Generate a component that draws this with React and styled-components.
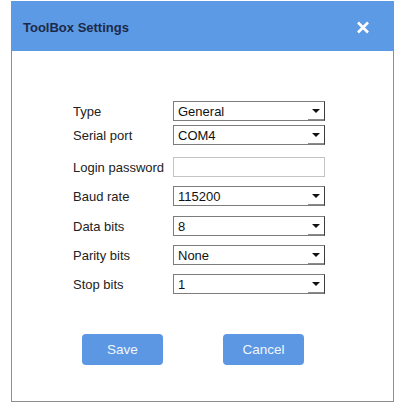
import React from "react";
import styled, { createGlobalStyle } from "styled-components";

const Global = createGlobalStyle`
  html, body { margin: 0; padding: 0; background: #ffffff; }
  body { font-family: "Liberation Sans", Arial, sans-serif; }
`;

const Dialog = styled.div`
  width: 383px;
  margin: 1px 0 0 11px;
  box-sizing: border-box;
`;

const Header = styled.div`
  height: 50px;
  background: #5d9ae6;
  display: flex;
  align-items: center;
  justify-content: space-between;
  padding: 0 24px 0 12px;
`;

const Title = styled.div`
  font-size: 13px;
  font-weight: bold;
  color: #1b2a48;
  margin-top: 2px;
`;

const Close = styled.button`
  border: none;
  background: none;
  padding: 0;
  width: 14px;
  height: 13px;
  display: flex;
  cursor: pointer;
  margin-top: 2px;
`;

const Body = styled.div`
  border: 1px solid #8e8e8e;
  border-top: none;
  height: 351px;
  box-sizing: border-box;
  padding: 50px 0 0 61px;
`;

const Form = styled.div`
  display: flex;
  flex-direction: column;
`;

const Row = styled.div`
  display: flex;
  align-items: center;
  height: 20px;
  margin-top: ${(p) => p.$gap || 0}px;
`;

const Label = styled.div`
  width: 100px;
  font-size: 13px;
  color: #222;
`;

const SelectBox = styled.div`
  position: relative;
  width: 152px;
  height: 20px;
  box-sizing: border-box;
  border: 1px solid #7c7c7c;
  border-right-color: #3c3c3c;
  display: flex;
  align-items: center;
  padding-left: 4px;
  font-size: 13px;
  color: #111;
  background: #fff;
`;

const InputBox = styled.div`
  width: 152px;
  height: 20px;
  box-sizing: border-box;
  border: 1px solid #c4c4c4;
  background: #fff;
`;

const Arrow = styled.div`
  position: absolute;
  right: 0;
  top: 0;
  bottom: 0;
  width: 16px;
  border-bottom: 1px solid #8a8a8a;
  box-sizing: border-box;
  display: flex;
  align-items: center;
  justify-content: center;
  &::after {
    content: "";
    border-left: 4px solid transparent;
    border-right: 4px solid transparent;
    border-top: 4px solid #111;
    margin-top: 1px;
  }
`;

const Buttons = styled.div`
  display: flex;
  gap: 60px;
  margin-top: 40px;
  padding-left: 9px;
`;

const Button = styled.button`
  width: 81px;
  height: 31px;
  border: none;
  border-radius: 4px;
  background: #5b97e2;
  color: #f2f6fc;
  font-family: "Liberation Sans", Arial, sans-serif;
  font-size: 13.5px;
  cursor: pointer;
`;

const rows = [
  { label: "Type", value: "General", gap: 0 },
  { label: "Serial port", value: "COM4", gap: 4 },
  { label: "Login password", input: true, gap: 12 },
  { label: "Baud rate", value: "115200", gap: 9 },
  { label: "Data bits", value: "8", gap: 10 },
  { label: "Parity bits", value: "None", gap: 9 },
  { label: "Stop bits", value: "1", gap: 9 },
];

export default function App() {
  return (
    <>
      <Global />
      <Dialog>
        <Header>
          <Title>ToolBox Settings</Title>
          <Close aria-label="Close">
            <svg width="14" height="13" viewBox="0 0 14 13">
              <path d="M2 1.5 L12 11.5 M12 1.5 L2 11.5" stroke="#ffffff" strokeWidth="2.6" strokeLinecap="butt" />
            </svg>
          </Close>
        </Header>
        <Body>
          <Form>
            {rows.map((r) => (
              <Row key={r.label} $gap={r.gap}>
                <Label>{r.label}</Label>
                {r.input ? (
                  <InputBox />
                ) : (
                  <SelectBox>
                    {r.value}
                    <Arrow />
                  </SelectBox>
                )}
              </Row>
            ))}
          </Form>
          <Buttons>
            <Button>Save</Button>
            <Button>Cancel</Button>
          </Buttons>
        </Body>
      </Dialog>
    </>
  );
}
